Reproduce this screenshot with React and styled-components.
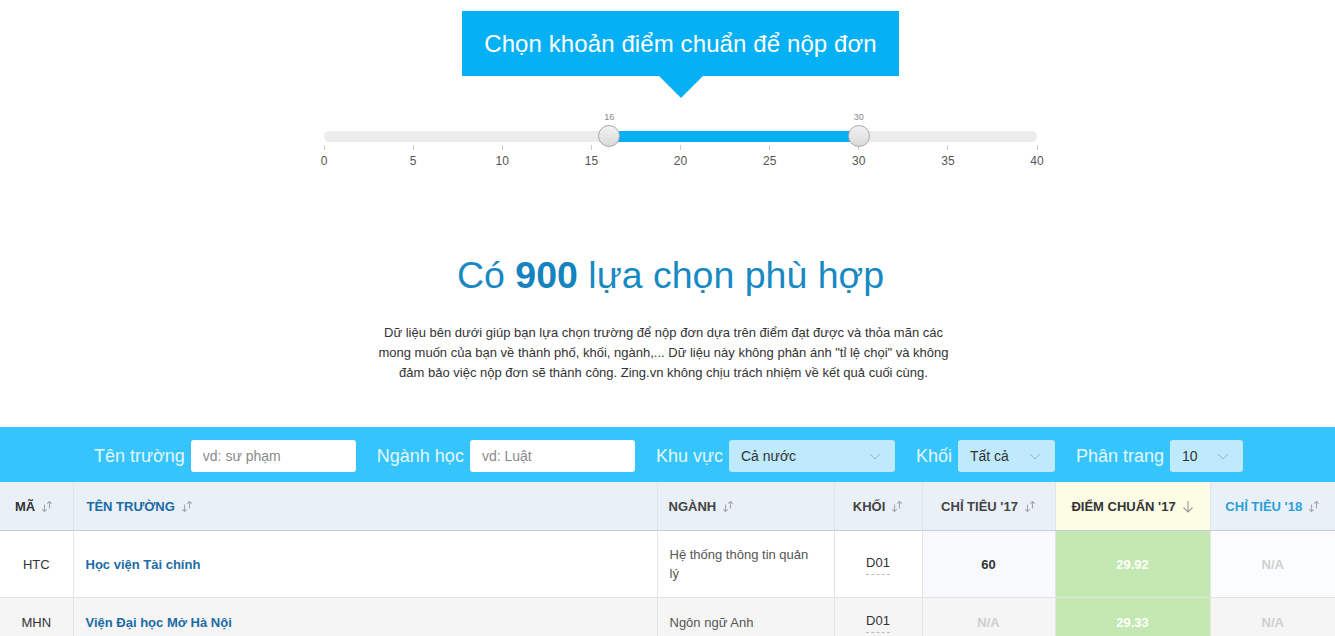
import React from 'react';
import styled, { createGlobalStyle } from 'styled-components';

const GlobalStyle = createGlobalStyle`
  html, body {
    margin: 0;
    padding: 0;
    background: #fff;
  }
  body {
    font-family: 'Liberation Sans', Arial, sans-serif;
    color: #333;
    overflow: hidden;
  }
`;

const Page = styled.div`
  width: 1335px;
  display: flex;
  flex-direction: column;
  align-items: center;
`;

// Banner with the little arrow under it
const Banner = styled.div`
  position: relative;
  margin: 11px 0 0 26px;
  width: 437px;
  height: 65px;
  background: #06b0f4;
  color: #fff;
  font-size: 24px;
  display: flex;
  align-items: center;
  justify-content: center;
  letter-spacing: 0.1px;

  &::after {
    content: '';
    position: absolute;
    left: 50%;
    bottom: -22px;
    margin-left: -22px;
    border-left: 22px solid transparent;
    border-right: 22px solid transparent;
    border-top: 22px solid #06b0f4;
  }
`;

// Range slider
const Slider = styled.div`
  position: relative;
  width: 713px;
  margin: 34px 0 0 26px;
  padding-top: 21px;
`;

const Track = styled.div`
  position: relative;
  height: 11px;
  border-radius: 6px;
  background: #ececec;
`;

const Range = styled.div`
  position: absolute;
  top: 0;
  bottom: 0;
  background: #07b0f4;
`;

const Thumb = styled.div`
  position: absolute;
  top: 15px;
  width: 22px;
  height: 22px;
  margin-left: -11px;
  border-radius: 50%;
  box-sizing: border-box;
  border: 1px solid #a9a9a9;
  background: linear-gradient(#f2f2f2, #dadada);
`;

const ThumbValue = styled.span`
  position: absolute;
  top: 2px;
  width: 30px;
  margin-left: -15px;
  text-align: center;
  font-size: 9px;
  color: #888;
`;

const Ticks = styled.div`
  display: flex;
  justify-content: space-between;
  margin-top: 3px;
`;

const Tick = styled.div`
  width: 0;
  display: flex;
  flex-direction: column;
  align-items: center;

  &::before {
    content: '';
    width: 1px;
    height: 5px;
    background: #ccc;
  }
`;

const TickLabel = styled.span`
  margin-top: 4px;
  font-size: 12px;
  line-height: 14px;
  color: #555;
  white-space: nowrap;
`;

const Heading = styled.h1`
  margin: 85px 0 0 6px;
  font-size: 37.5px;
  line-height: 44px;
  font-weight: normal;
  color: #1789c4;

  b {
    font-weight: bold;
    color: #1583be;
  }
`;

const Note = styled.p`
  margin: 26px 8px 0 0;
  width: 590px;
  text-align: center;
  font-size: 13px;
  line-height: 20px;
  color: #333;
`;

// Filter bar
const FilterBar = styled.div`
  margin-top: 44px;
  align-self: stretch;
  height: 55px;
  background: #35c4fb;
  display: flex;
  align-items: center;
  justify-content: center;
  gap: 21px;
  padding: 3px 0 0 2px;
  box-sizing: border-box;
`;

const Field = styled.label`
  display: flex;
  align-items: center;
  gap: 6px;
`;

const FieldLabel = styled.span`
  font-size: 18px;
  color: #e4f6ff;
`;

const TextInput = styled.input`
  width: 165px;
  height: 32px;
  box-sizing: border-box;
  border: none;
  border-radius: 3px;
  padding: 0 12px;
  font-family: 'Liberation Sans', Arial, sans-serif;
  font-size: 14px;
  color: #333;
  background: #fff;
  outline: none;

  &::placeholder {
    color: #8a8a8a;
  }
`;

const Select = styled.div`
  width: ${p => p.$w}px;
  height: 32px;
  box-sizing: border-box;
  border-radius: 3px;
  padding: 0 14px 0 12px;
  background: #bfeafd;
  display: flex;
  align-items: center;
  justify-content: space-between;
  font-size: 14px;
  color: #333;
`;

const Chevron = () => (
  <svg width="12" height="7" viewBox="0 0 12 7">
    <polyline points="1,1 6,6 11,1" fill="none" stroke="#9cb6c4" strokeWidth="1" />
  </svg>
);

// Table
const Table = styled.table`
  align-self: stretch;
  width: 1335px;
  border-collapse: collapse;
  table-layout: fixed;
`;

const Th = styled.th`
  height: 48px;
  padding: 0 4px 0 ${p => (p.$align === 'left' ? p.$pl || 12 : 4)}px;
  text-align: ${p => p.$align || 'center'};
  font-size: 13px;
  font-weight: bold;
  color: ${p => p.$color || '#444'};
  background: ${p => p.$bg || '#e9f0f7'};
  border-right: 1px solid #dde5ee;
  border-bottom: 1px solid #c9cdd2;
  white-space: nowrap;

  &:last-child {
    border-right: none;
  }
`;

const SortSvg = styled.svg`
  vertical-align: -2px;
  margin-left: 6px;
`;

const SortIcon = () => (
  <SortSvg width="12" height="13" viewBox="0 0 12 13">
    <path
      d="M3.5 4.5v7M1.3 9.3l2.2 2.2 2.2-2.2M8.5 8.5v-7M6.3 3.7l2.2-2.2 2.2 2.2"
      fill="none"
      stroke="#a8a8a8"
      strokeWidth="1.1"
    />
  </SortSvg>
);

const DownIcon = () => (
  <SortSvg width="12" height="13" viewBox="0 0 12 13">
    <path d="M6 1v11M1.5 7.5L6 12l4.5-4.5" fill="none" stroke="#9a9a9a" strokeWidth="1.1" />
  </SortSvg>
);

const Row = styled.tr`
  background: ${p => (p.$alt ? '#f5f5f5' : '#fff')};
`;

const Td = styled.td`
  height: ${p => p.$h || 38}px;
  padding: ${p => (p.$align === 'left' ? '0 24px 0 12px' : '0 4px')};
  text-align: ${p => p.$align || 'center'};
  font-size: 13px;
  line-height: 19px;
  color: #333;
  border-right: 1px solid #e4e4e4;
  border-bottom: 1px solid #e2e2e2;
  background: ${p => p.$bg || 'transparent'};
  vertical-align: middle;

  &:last-child {
    border-right: none;
  }
`;

const School = styled.span`
  font-weight: bold;
  color: #1b6ba6;
`;

const Major = styled.span`
  color: #555;
`;

const Block = styled.span`
  display: inline-block;
  padding-bottom: 2px;
  border-bottom: 1px dashed #bbb;
  color: #333;
`;

const Quota = styled.span`
  font-weight: bold;
  color: ${p => (p.$na ? '#cfcfcf' : '#333')};
`;

const Score = styled.span`
  font-weight: bold;
  color: #fff;
`;

const columns = [
  { key: 'ma', title: 'MÃ', w: 73, align: 'left', pl: 15, color: '#333' },
  { key: 'ten', title: 'TÊN TRƯỜNG', w: 584, align: 'left', pl: 13, color: '#1b6ba6' },
  { key: 'nganh', title: 'NGÀNH', w: 177, align: 'left', pl: 11, color: '#444' },
  { key: 'khoi', title: 'KHỐI', w: 88, color: '#444' },
  { key: 'ct17', title: "CHỈ TIÊU '17", w: 133, color: '#444' },
  { key: 'dc17', title: "ĐIỂM CHUẨN '17", w: 155, color: '#333', bg: '#fdfde6', down: true },
  { key: 'ct18', title: "CHỈ TIÊU '18", w: 125, color: '#2b9fd8' },
];

const rows = [
  { ma: 'HTC', ten: 'Học viện Tài chính', nganh: 'Hệ thống thông tin quản lý', khoi: 'D01', ct17: '60', dc17: '29.92', ct18: 'N/A', h: 66 },
  { ma: 'MHN', ten: 'Viện Đại học Mở Hà Nội', nganh: 'Ngôn ngữ Anh', khoi: 'D01', ct17: 'N/A', dc17: '29.33', ct18: 'N/A', h: 48 },
];

const ticks = [0, 5, 10, 15, 20, 25, 30, 35, 40];
const min = 16;
const max = 30;
const pct = v => (v / 40) * 100;

export default function App() {
  return (
    <Page>
      <GlobalStyle />
      <Banner>Chọn khoản điểm chuẩn để nộp đơn</Banner>

      <Slider>
        <ThumbValue style={{ left: `${pct(min)}%` }}>{min}</ThumbValue>
        <ThumbValue style={{ left: `${pct(max)}%` }}>{max}</ThumbValue>
        <Track>
          <Range style={{ left: `${pct(min)}%`, width: `${pct(max - min)}%` }} />
        </Track>
        <Thumb style={{ left: `${pct(min)}%` }} />
        <Thumb style={{ left: `${pct(max)}%` }} />
        <Ticks>
          {ticks.map(t => (
            <Tick key={t}>
              <TickLabel>{t}</TickLabel>
            </Tick>
          ))}
        </Ticks>
      </Slider>

      <Heading>
        Có <b>900</b> lựa chọn phù hợp
      </Heading>
      <Note>
        Dữ liệu bên dưới giúp bạn lựa chọn trường để nộp đơn dựa trên điểm đạt được và thỏa mãn các
        mong muốn của bạn về thành phố, khối, ngành,... Dữ liệu này không phản ánh "tỉ lệ chọi" và không
        đảm bảo việc nộp đơn sẽ thành công. Zing.vn không chịu trách nhiệm về kết quả cuối cùng.
      </Note>

      <FilterBar>
        <Field>
          <FieldLabel>Tên trường</FieldLabel>
          <TextInput placeholder="vd: sư phạm" />
        </Field>
        <Field>
          <FieldLabel>Ngành học</FieldLabel>
          <TextInput placeholder="vd: Luật" />
        </Field>
        <Field>
          <FieldLabel>Khu vực</FieldLabel>
          <Select $w={166}>
            Cả nước
            <Chevron />
          </Select>
        </Field>
        <Field>
          <FieldLabel>Khối</FieldLabel>
          <Select $w={97}>
            Tất cả
            <Chevron />
          </Select>
        </Field>
        <Field>
          <FieldLabel>Phân trang</FieldLabel>
          <Select $w={73}>
            10
            <Chevron />
          </Select>
        </Field>
      </FilterBar>

      <Table>
        <colgroup>
          {columns.map(c => (
            <col key={c.key} style={{ width: c.w }} />
          ))}
        </colgroup>
        <thead>
          <tr>
            {columns.map(c => (
              <Th key={c.key} $align={c.align} $pl={c.pl} $color={c.color} $bg={c.bg}>
                {c.title}
                {c.down ? <DownIcon /> : <SortIcon />}
              </Th>
            ))}
          </tr>
        </thead>
        <tbody>
          {rows.map((r, i) => (
            <Row key={r.ma} $alt={i % 2 === 1}>
              <Td $h={r.h}>{r.ma}</Td>
              <Td $align="left">
                <School>{r.ten}</School>
              </Td>
              <Td $align="left">
                <Major>{r.nganh}</Major>
              </Td>
              <Td>
                <Block>{r.khoi}</Block>
              </Td>
              <Td $bg={i % 2 === 1 ? undefined : '#f7f9fc'}>
                <Quota $na={r.ct17 === 'N/A'}>{r.ct17}</Quota>
              </Td>
              <Td $bg="#c3e8b1">
                <Score>{r.dc17}</Score>
              </Td>
              <Td $bg={i % 2 === 1 ? undefined : '#fbfcfd'}>
                <Quota $na>{r.ct18}</Quota>
              </Td>
            </Row>
          ))}
        </tbody>
      </Table>
    </Page>
  );
}
